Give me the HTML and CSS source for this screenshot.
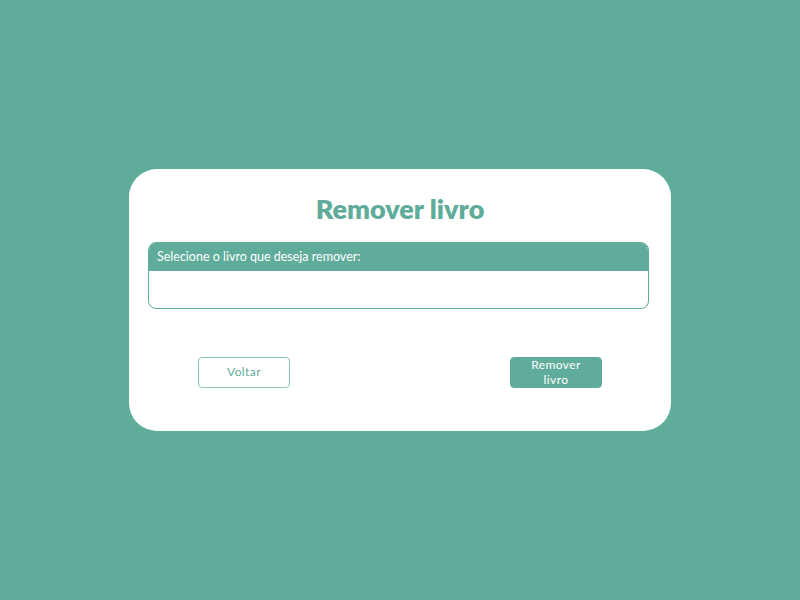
FILE: index.html
```html
<!DOCTYPE html>
<html lang="pt">
<head>
<meta charset="utf-8">
<title>Remover livro</title>
<link rel="stylesheet" href="styles.css">
</head>
<body>
<main class="card">
  <h1 class="title">Remover livro</h1>
  <section class="select-box">
    <div class="select-head">Selecione o livro que deseja remover:</div>
    <div class="select-body"></div>
  </section>
  <div class="actions">
    <button class="btn btn-outline" type="button">Voltar</button>
    <button class="btn btn-solid" type="button">Remover<br>livro</button>
  </div>
</main>
</body>
</html>
```
FILE: styles.css
```css
html, body {
  margin: 0;
  height: 100%;
}
body {
  background: #5fac9a;
  display: flex;
  align-items: center;
  justify-content: center;
  font-family: "Lato", "Noto Sans", sans-serif;
}
.card {
  box-sizing: border-box;
  width: 542px;
  height: 262px;
  background: #ffffff;
  border-radius: 28px;
  padding: 24px 0 0 19px;
  display: flex;
  flex-direction: column;
}
.title {
  margin: 0 19px 0 0;
  text-align: center;
  font-size: 27px;
  line-height: 32px;
  font-weight: 800;
  color: #5fac9a;
}
.select-box {
  box-sizing: border-box;
  margin-top: 17px;
  width: 501px;
  height: 67px;
  border: 1.5px solid #5fac9a;
  border-radius: 8px;
  overflow: hidden;
}
.select-head {
  height: 28px;
  background: #5fac9a;
  color: #ffffff;
  font-size: 12.5px;
  line-height: 28px;
  padding-left: 8px;
}
.actions {
  margin-top: 48px;
  padding: 0 69px 0 50px;
  display: flex;
  justify-content: space-between;
}
.btn {
  box-sizing: border-box;
  width: 92px;
  height: 31px;
  border-radius: 4px;
  font-family: "Lato", "Noto Sans", sans-serif;
  font-size: 12px;
  line-height: 14.5px;
  letter-spacing: 0.4px;
  padding: 0;
  cursor: pointer;
}
.btn-outline {
  background: #ffffff;
  color: #5fac9a;
  border: 1.5px solid #8cc5b7;
}
.btn-solid {
  background: #5fac9a;
  color: #ffffff;
  border: 1px solid #5fac9a;
}
```
